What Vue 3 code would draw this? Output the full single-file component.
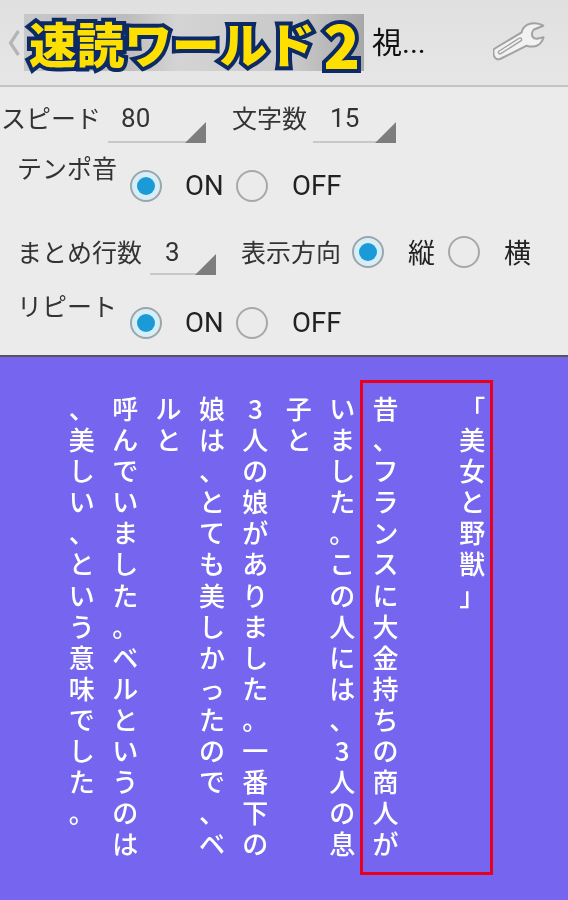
<script setup>
const columns = [
  '「美女と野獣」',
  '',
  '昔、フランスに大金持ちの商人が',
  'いました。この人には、3人の息',
  '子と',
  '3人の娘がありました。一番下の',
  '娘は、とても美しかったので、ベ',
  'ルと',
  '呼んでいました。ベルというのは',
  '、美しい、という意味でした。'
].map((text) => Array.from(text))
</script>

<template>
  <div class="screen">
    <header class="bar">
      <svg class="back" width="12" height="26" viewBox="0 0 12 26">
        <path d="M10.5 1 L2.5 13 L10.5 25" fill="none" stroke="#b4b4b4" stroke-width="3.2" />
      </svg>
      <div class="logo"><span class="logo-text">速読ワールド</span><span class="logo-two">2</span></div>
      <span class="title">視...</span>
      <svg class="wrench" width="52" height="39" viewBox="0 0 52 39">
        <path
          d="M1 27 L28.7 10.3 C29 6 33 2.5 38 1.6 C42 1 47 1.6 50.3 3.7 L41 7.5 C39 9 38.5 12.5 39.5 14.5 C40.5 16.5 42.5 17 44 16.8 L50.6 15.3 C49.5 19 47 22.5 43.7 23.7 C40.5 24.8 36.5 24.8 33.7 23.7 L7 37 C4.5 38 2 36.5 1 34 C0.2 31.5 0.2 29 1 27 Z"
          fill="#f2f2f2" stroke="#a2a2a2" stroke-width="2" stroke-linejoin="round"
        />
        <path d="M7 30.3 L27 17.6" fill="none" stroke="#a2a2a2" stroke-width="4.5" stroke-linecap="round" />
        <path d="M7 30.3 L27 17.6" fill="none" stroke="#f2f2f2" stroke-width="1.8" stroke-linecap="round" />
      </svg>
    </header>

    <section class="controls">
      <div class="row row-first">
        <span class="label">スピード</span>
        <div class="spinner spinner-speed">80</div>
        <span class="label label-chars">文字数</span>
        <div class="spinner spinner-chars">15</div>
      </div>

      <div class="row row-option">
        <span class="label label-short">テンポ音</span>
        <div class="radios radios-low">
          <span class="radio on"></span><span class="opt opt-on">ON</span>
          <span class="radio"></span><span class="opt opt-off">OFF</span>
        </div>
      </div>

      <div class="row row-third">
        <span class="label">まとめ行数</span>
        <div class="spinner spinner-lines">3</div>
        <span class="label label-dir">表示方向</span>
        <span class="radio on radio-dir"></span><span class="opt opt-ja">縦</span>
        <span class="radio radio-h"></span><span class="opt opt-ja opt-ja-h">横</span>
      </div>

      <div class="row row-repeat">
        <span class="label label-short">リピート</span>
        <div class="radios radios-repeat">
          <span class="radio on"></span><span class="opt opt-on">ON</span>
          <span class="radio"></span><span class="opt opt-off">OFF</span>
        </div>
      </div>
    </section>

    <main class="reader">
      <div class="highlight"></div>
      <div class="columns">
        <div v-for="(col, i) in columns" :key="i" class="column">
          <span v-for="(ch, j) in col" :key="j" class="char">{{ ch }}</span>
        </div>
      </div>
    </main>
  </div>
</template>

<style>
html, body { margin: 0; background: #7565ef; }
</style>

<style scoped>
.screen {
  width: 568px;
  height: 900px;
  overflow: hidden;
  display: flex;
  flex-direction: column;
  font-family: Roboto, "Noto Sans CJK JP", sans-serif;
  color: #333;
  filter: blur(0.4px);
}

.bar {
  height: 87px;
  flex: none;
  display: flex;
  align-items: center;
  padding-left: 8px;
  box-sizing: border-box;
  background: linear-gradient(#e0e0e0, #e6e6e6);
  border-bottom: 2px solid #c4c4c4;
}
.back { flex: none; }
.logo {
  margin-left: 4px;
  width: 340px;
  height: 57px;
  flex: none;
  display: flex;
  align-items: center;
  padding-left: 5px;
  box-sizing: border-box;
  background: linear-gradient(90deg, #c8c8c8 0%, #bcbcbc 30%, #d4d4d4 45%, #c8c8c8 80%, #a8a8a8 100%);
  font-family: "Noto Sans CJK JP", sans-serif;
  font-weight: 900;
  color: #ffdf00;
  -webkit-text-stroke: 8px #0c2a66;
  paint-order: stroke fill;
  white-space: nowrap;
  line-height: 57px;
}
.logo-text { font-size: 48px; letter-spacing: -0.4px; }
.logo-two { font-size: 60px; margin-left: 9px; }
.title {
  margin-left: 8px;
  font-size: 30px;
  line-height: 36px;
  color: #111;
  font-family: Roboto, "Noto Sans CJK JP", sans-serif;
  white-space: nowrap;
}
.wrench { margin-left: auto; margin-right: 23px; margin-bottom: 3px; flex: none; }

.controls {
  height: 270px;
  flex: none;
  box-sizing: border-box;
  background: #ebebeb;
  border-bottom: 2px solid #555;
  display: flex;
  flex-direction: column;
}
.row { display: flex; align-items: flex-start; }
.row-first { height: 49px; padding-left: 1px; margin-top: 6px; }
.row-option { height: 70px; padding-left: 17px; margin-top: 10px; }
.row-third { height: 54px; padding-left: 17px; margin-top: 14px; }
.row-repeat { height: 50px; padding-left: 17px; }

.label {
  font-size: 25px;
  line-height: 48px;
  white-space: nowrap;
  font-family: "Noto Sans CJK JP", sans-serif;
  flex: none;
}
.label-short { line-height: 30px; }
.label-chars { margin-left: 26px; }
.label-dir { margin-left: 25px; }

.row-third .label { line-height: 30px; }
.row-third .opt { line-height: 32px; }

.spinner {
  position: relative;
  height: 48px;
  line-height: 50px;
  border-bottom: 2px solid #c8c8c8;
  font-size: 26px;
  color: #333;
  flex: none;
}
.spinner::after {
  content: "";
  position: absolute;
  right: 0;
  bottom: -2px;
  width: 21px;
  height: 21px;
  background: #7d7d7d;
  clip-path: polygon(100% 0, 100% 100%, 0 100%);
}
.spinner-speed { margin-left: 7px; width: 85px; padding-left: 13px; }
.spinner-chars { margin-left: 6px; width: 66px; padding-left: 17px; }
.spinner-lines { margin-left: 8px; width: 51px; padding-left: 15px; height: 37px; line-height: 32px; }

.radios { display: flex; align-items: center; margin-left: 13px; }
.radios-low { margin-top: 18px; }
.radios-repeat { margin-top: 17px; }

.radio {
  width: 28px;
  height: 28px;
  border: 2px solid #a8a8a8;
  border-radius: 50%;
  flex: none;
  position: relative;
}
.radio.on {
  background: #d8eef7;
  border-color: #9aa6ac;
}
.radio.on::after {
  content: "";
  position: absolute;
  left: 5px;
  top: 5px;
  width: 18px;
  height: 18px;
  border-radius: 50%;
  background: #1a9bd7;
}

.opt {
  font-size: 27.5px;
  line-height: 32px;
  color: #222;
  flex: none;
}
.opt-on { margin-left: 23px; width: 51px; }
.opt-off { margin-left: 24px; }

.radio-dir { margin-left: 11px; }
.opt-ja { margin-left: 24px; font-family: "Noto Sans CJK JP", sans-serif; width: 27px; font-size: 27px; }
.radio-h { margin-left: 13px; }
.opt-ja-h { margin-left: 24px; }

.reader {
  position: relative;
  flex: 1;
  background: #7565ef;
}
.highlight {
  position: absolute;
  left: 360px;
  top: 23px;
  width: 127px;
  height: 489px;
  border: 3px solid #e8001c;
}
.columns {
  position: absolute;
  top: 0;
  right: 74px;
  padding-top: 35px;
  display: flex;
  flex-direction: row-reverse;
}
.column {
  width: 43.4px;
  display: flex;
  flex-direction: column;
  align-items: center;
}
.char {
  display: block;
  width: 26px;
  height: 31.1px;
  line-height: 31.1px;
  font-size: 26px;
  text-align: center;
  color: #fff;
  font-family: "Noto Sans CJK JP", sans-serif;
  font-weight: 500;
  white-space: nowrap;
}
</style>
